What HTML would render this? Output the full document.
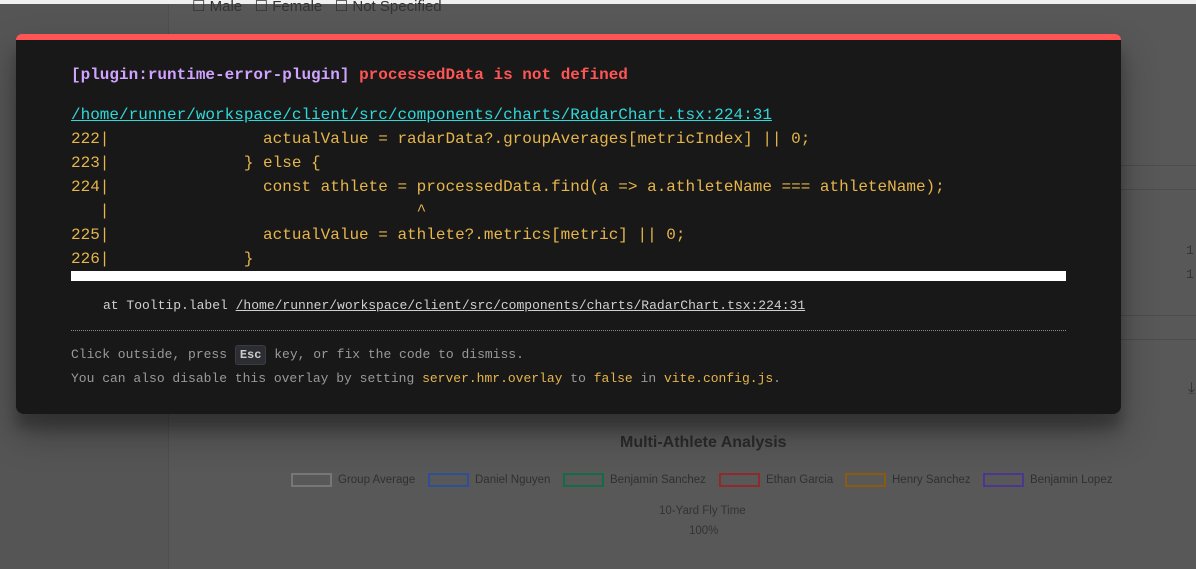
<!DOCTYPE html>
<html><head><style>
body{margin:0;width:1196px;height:569px;overflow:hidden;background:#585858;font-family:"Liberation Sans",sans-serif;position:relative}
.side{position:absolute;left:0;top:0;width:168px;height:569px;background:#555;border-right:1px solid #4e4e4e}
.top{position:absolute;left:0;top:0;width:1196px;height:4px;background:#f0f0f0}
.bg{position:absolute;color:#333}
.ov{position:absolute;left:16px;top:34px;width:1105px;height:380px;background:#181818;border-top:6px solid #ff5555;border-radius:6px 6px 8px 8px;box-shadow:0 19px 38px rgba(0,0,0,.3),0 15px 12px rgba(0,0,0,.22);box-sizing:border-box;font-family:"Liberation Mono",monospace}
.ov pre{margin:0;font-family:"Liberation Mono",monospace}
.t{position:absolute;left:55px;top:26px;font-size:16px;font-weight:bold}
.f{position:absolute;left:55px;top:63px;font-size:16px;line-height:24px;color:#e5b54b}
.f a{color:#2dd9da;text-decoration:underline}
.bar{position:absolute;left:55px;top:231px;width:995px;height:10px;background:#fff}
.st{position:absolute;left:87px;top:258px;font-size:13px;color:#d0d0d0}
.hr{position:absolute;left:55px;top:290px;width:995px;border-top:1px dotted #888}
.tip{position:absolute;left:55px;top:303px;font-size:13px;line-height:23px;color:#999}
kbd{font-family:"Liberation Mono",monospace;font-weight:bold;font-size:12px;background:#2b2d33;color:#ccc;border:1px solid #3a3c42;border-radius:3px;padding:2px 4px}
.y{color:#e5b54b}
.leg{position:absolute;top:473px;font-size:11.5px;color:#303030}
.sw{display:inline-block;width:37px;height:10px;border:2px solid;vertical-align:middle;margin-right:6px}
</style></head><body>
<div class="side"></div>
<div class="top"></div>
<div class="bg" style="left:192px;top:-3px;font-size:15px">☐ Male &nbsp;&nbsp;☐ Female &nbsp;&nbsp;☐ Not Specified</div>
<div class="bg" style="left:168px;top:165px;width:1028px;border-top:1px solid #4c4c4c"></div>
<div class="bg" style="left:168px;top:189px;width:1028px;border-top:1px solid #4c4c4c"></div>
<div class="bg" style="left:168px;top:315px;width:1028px;border-top:1px solid #4c4c4c"></div>
<div class="bg" style="left:168px;top:339px;width:1028px;border-top:1px solid #4c4c4c"></div>
<div class="bg" style="left:1186px;top:243px;font-size:13px;font-family:'Liberation Mono'">1</div>
<div class="bg" style="left:1186px;top:267px;font-size:13px;font-family:'Liberation Mono'">1</div>
<div class="bg" style="left:1188px;top:380px;font-size:16px">⤓</div>
<div class="bg" style="left:620px;top:434px;font-size:16px;font-weight:bold;color:#2a2a2a">Multi-Athlete Analysis</div>
<div class="leg" style="left:291px"><span class="sw" style="border-color:#777"></span>Group Average</div>
<div class="leg" style="left:428px"><span class="sw" style="border-color:#2c4f96"></span>Daniel Nguyen</div>
<div class="leg" style="left:563px"><span class="sw" style="border-color:#146b47"></span>Benjamin Sanchez</div>
<div class="leg" style="left:719px"><span class="sw" style="border-color:#8e2a2a"></span>Ethan Garcia</div>
<div class="leg" style="left:845px"><span class="sw" style="border-color:#8a5a12"></span>Henry Sanchez</div>
<div class="leg" style="left:983px"><span class="sw" style="border-color:#4d3690"></span>Benjamin Lopez</div>
<div class="bg" style="left:659px;top:505px;font-size:11.5px">10-Yard Fly Time</div>
<div class="bg" style="left:689px;top:525px;font-size:11.5px">100%</div>
<div class="ov">
<div class="t"><span style="color:#cfa3ff">[plugin:runtime-error-plugin]</span> <span style="color:#ff5555">processedData is not defined</span></div>
<pre class="f"><a>/home/runner/workspace/client/src/components/charts/RadarChart.tsx:224:31</a>
222|                actualValue = radarData?.groupAverages[metricIndex] || 0;
223|              } else {
224|                const athlete = processedData.find(a => a.athleteName === athleteName);
   |                                ^
225|                actualValue = athlete?.metrics[metric] || 0;
226|              }</pre>
<div class="bar"></div>
<pre class="st">at Tooltip.label <u>/home/runner/workspace/client/src/components/charts/RadarChart.tsx:224:31</u></pre>
<div class="hr"></div>
<pre class="tip">Click outside, press <kbd>Esc</kbd> key, or fix the code to dismiss.
You can also disable this overlay by setting <span class="y">server.hmr.overlay</span> to <span class="y">false</span> in <span class="y">vite.config.js</span>.</pre>
</div>
</body></html>
